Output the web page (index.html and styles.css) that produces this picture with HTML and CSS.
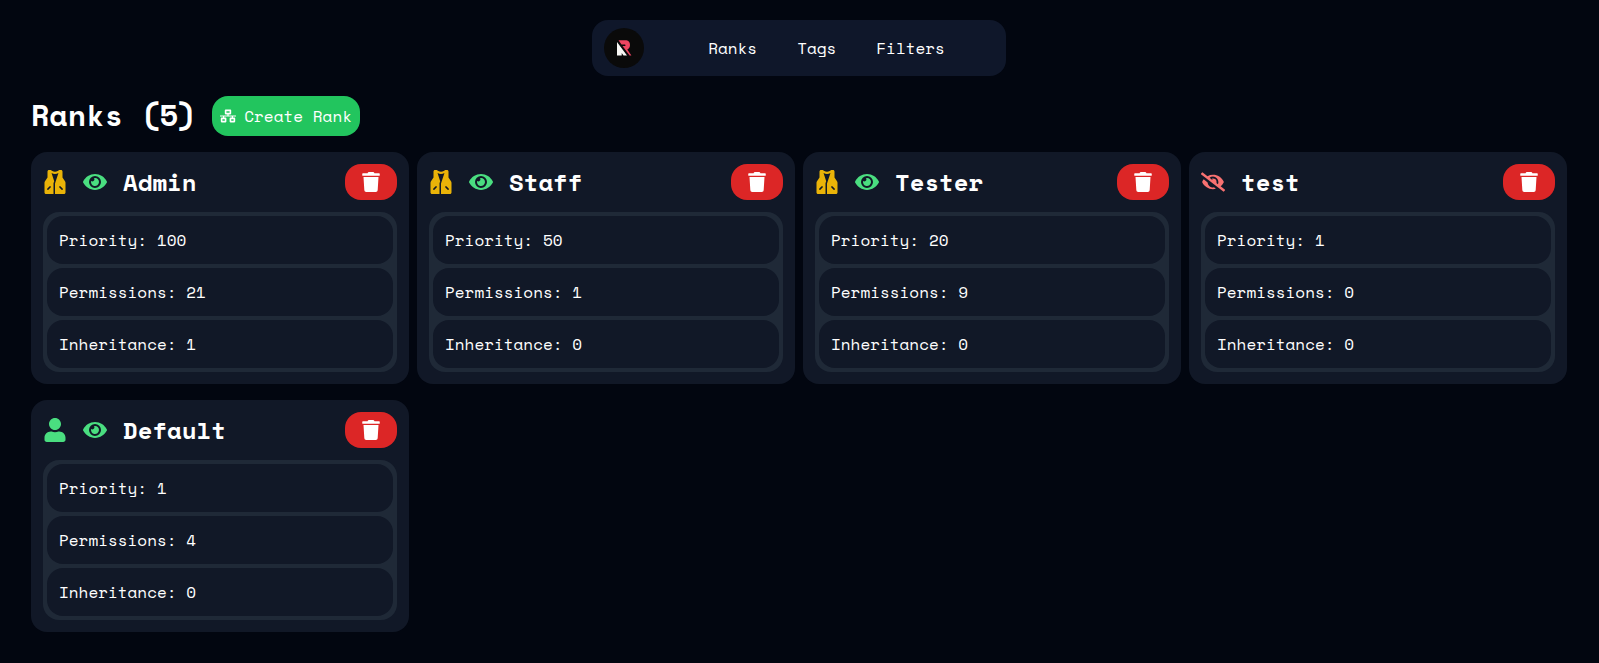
FILE: index.html
```html
<!DOCTYPE html>
<html lang="en">
<head>
<meta charset="utf-8">
<meta name="viewport" content="width=device-width, initial-scale=1">
<title>Ranks</title>
<link rel="stylesheet" href="styles.css">
</head>
<body>
<svg class="sprite" aria-hidden="true">
  <symbol id="eye" viewBox="0 0 576 512"><path d="M572.52 241.4C518.29 135.59 410.93 64 288 64S57.68 135.64 3.48 241.41a32.35 32.35 0 0 0 0 29.19C57.71 376.41 165.07 448 288 448s230.32-71.64 284.52-177.41a32.35 32.35 0 0 0 0-29.19zM288 400a144 144 0 1 1 144-144 143.93 143.93 0 0 1-144 144zm0-240a95.31 95.31 0 0 0-25.31 3.79 47.85 47.85 0 0 1-66.9 66.9A95.78 95.78 0 1 0 288 160z"/></symbol>
  <symbol id="eye-slash" viewBox="0 0 640 512"><path d="M320 400c-75.85 0-137.25-58.71-142.9-133.11L72.2 185.82c-13.79 17.3-26.48 35.59-36.72 55.59a32.35 32.35 0 0 0 0 29.19C89.71 376.41 197.07 448 320 448c26.91 0 52.87-4 77.89-10.46L346 397.39a144.13 144.13 0 0 1-26 2.61zm313.82 58.1l-110.55-85.44a331.25 331.25 0 0 0 81.25-102.07 32.35 32.35 0 0 0 0-29.19C550.29 135.59 442.93 64 320 64a308.15 308.15 0 0 0-147.32 37.7L45.46 3.37A16 16 0 0 0 23 6.18L3.37 31.45A16 16 0 0 0 6.18 53.9l588.36 454.73a16 16 0 0 0 22.46-2.81l19.64-25.27a16 16 0 0 0-2.82-22.45zm-183.72-142l-39.3-30.38A94.75 94.75 0 0 0 416 256a94.76 94.76 0 0 0-121.31-92.21A47.65 47.65 0 0 1 304 192a46.64 46.64 0 0 1-1.54 10l-73.61-56.89A142.31 142.31 0 0 1 320 112a143.92 143.92 0 0 1 144 144c0 21.63-5.29 41.79-13.9 60.11z"/></symbol>
  <symbol id="trash" viewBox="0 0 448 512"><path d="M432 32H312l-9.4-18.7A24 24 0 0 0 281.1 0H166.8a23.72 23.72 0 0 0-21.4 13.3L136 32H16A16 16 0 0 0 0 48v32a16 16 0 0 0 16 16h416a16 16 0 0 0 16-16V48a16 16 0 0 0-16-16zM53.2 467a48 48 0 0 0 47.9 45h245.8a48 48 0 0 0 47.9-45L416 128H32z"/></symbol>
  <symbol id="user" viewBox="0 0 448 512"><path d="M224 256c70.7 0 128-57.3 128-128S294.7 0 224 0 96 57.3 96 128s57.3 128 128 128zm89.6 32h-16.7c-22.2 10.2-46.9 16-72.9 16s-50.6-5.8-72.9-16h-16.7C60.2 288 0 348.2 0 422.4V464c0 26.5 21.5 48 48 48h352c26.5 0 48-21.5 48-48v-41.6c0-74.2-60.2-134.4-134.4-134.4z"/></symbol>
  <symbol id="vest" viewBox="0 0 448 512"><path d="M437.3 239.9L384 160V32c0-17.67-14.33-32-32-32h-32c-4.75 0-9.375 1.406-13.31 4.031l-25 16.66c-35.03 23.38-80.28 23.38-115.4 0l-25-16.66C137.4 1.406 132.7 0 128 0H96C78.33 0 64 14.33 64 32v128L10.75 239.9C3.74 250.4 0 262.7 0 275.4V480c0 17.67 14.33 32 32 32h160V288c0-3.439 .5547-6.855 1.643-10.12l13.49-40.48L150.2 66.56C173.2 79.43 198.5 86.25 224 86.25s50.79-6.824 73.81-19.69L224 288v224h192c17.67 0 32-14.33 32-32V275.4C448 262.7 444.3 250.4 437.3 239.9zM131.3 371.3l-48 48C80.19 422.4 76.09 424 72 424s-8.188-1.562-11.31-4.688c-6.25-6.25-6.25-16.38 0-22.62l48-48c6.25-6.25 16.38-6.25 22.62 0S137.6 365.1 131.3 371.3zM387.3 419.3C384.2 422.4 380.1 424 376 424s-8.188-1.562-11.31-4.688l-48-48c-6.25-6.25-6.25-16.38 0-22.62s16.38-6.25 22.62 0l48 48C393.6 402.9 393.6 413.1 387.3 419.3z"/></symbol>
  <symbol id="network" viewBox="0 0 640 512"><path d="M640 264v-16c0-8.84-7.16-16-16-16H344v-40h72c17.67 0 32-14.33 32-32V32c0-17.67-14.33-32-32-32H224c-17.67 0-32 14.33-32 32v128c0 17.67 14.33 32 32 32h72v40H16c-8.84 0-16 7.16-16 16v16c0 8.84 7.16 16 16 16h104v40H64c-17.67 0-32 14.33-32 32v128c0 17.67 14.33 32 32 32h160c17.67 0 32-14.33 32-32V352c0-17.67-14.33-32-32-32h-56v-40h304v40h-56c-17.67 0-32 14.33-32 32v128c0 17.67 14.33 32 32 32h160c17.67 0 32-14.33 32-32V352c0-17.67-14.33-32-32-32h-56v-40h104c8.84 0 16-7.16 16-16zM256 128V64h128v64H256zm-64 320H96v-64h96v64zm352 0h-96v-64h96v64z"/></symbol>
</svg>

<nav class="navbar">
  <a class="logo" href="#" aria-label="Home">
    <svg viewBox="0 0 40 40" aria-hidden="true">
      <path fill="#f8f7f5" d="M13 14l10 13.500h-3.500l-1.800-2.500v2.500H13z"/>
      <path fill="#ec4561" d="M14.500 12.300H21c3.500 0 5 2 5 4.700 0 2.200-1 3.700-2.700 4.500L27.400 27.500h-1.800L18.500 18h2.300c1 0 1-1.400 0-1.400h-3.300z"/>
    </svg>
  </a>
  <ul class="links">
    <li><a href="#">Ranks</a></li>
    <li><a href="#">Tags</a></li>
    <li><a href="#">Filters</a></li>
  </ul>
</nav>

<main class="page">
  <header class="page-head">
    <h1>Ranks (5)</h1>
    <button class="create" type="button"><svg class="icon-sm" aria-hidden="true"><use href="#network"/></svg>Create Rank</button>
  </header>

  <section class="cards">
    <article class="card">
      <header class="card-head">
        <svg class="icon gold" aria-hidden="true"><use href="#vest"/></svg>
        <svg class="icon green" aria-hidden="true"><use href="#eye"/></svg>
        <h2>Admin</h2>
        <button class="delete" type="button" aria-label="Delete Admin"><svg class="icon-md" aria-hidden="true"><use href="#trash"/></svg></button>
      </header>
      <ul class="stats"><li>Priority: 100</li><li>Permissions: 21</li><li>Inheritance: 1</li></ul>
    </article>
    <article class="card">
      <header class="card-head">
        <svg class="icon gold" aria-hidden="true"><use href="#vest"/></svg>
        <svg class="icon green" aria-hidden="true"><use href="#eye"/></svg>
        <h2>Staff</h2>
        <button class="delete" type="button" aria-label="Delete Staff"><svg class="icon-md" aria-hidden="true"><use href="#trash"/></svg></button>
      </header>
      <ul class="stats"><li>Priority: 50</li><li>Permissions: 1</li><li>Inheritance: 0</li></ul>
    </article>
    <article class="card">
      <header class="card-head">
        <svg class="icon gold" aria-hidden="true"><use href="#vest"/></svg>
        <svg class="icon green" aria-hidden="true"><use href="#eye"/></svg>
        <h2>Tester</h2>
        <button class="delete" type="button" aria-label="Delete Tester"><svg class="icon-md" aria-hidden="true"><use href="#trash"/></svg></button>
      </header>
      <ul class="stats"><li>Priority: 20</li><li>Permissions: 9</li><li>Inheritance: 0</li></ul>
    </article>
    <article class="card">
      <header class="card-head">
        <svg class="icon red" aria-hidden="true"><use href="#eye-slash"/></svg>
        <h2>test</h2>
        <button class="delete" type="button" aria-label="Delete test"><svg class="icon-md" aria-hidden="true"><use href="#trash"/></svg></button>
      </header>
      <ul class="stats"><li>Priority: 1</li><li>Permissions: 0</li><li>Inheritance: 0</li></ul>
    </article>
    <article class="card">
      <header class="card-head">
        <svg class="icon green" aria-hidden="true"><use href="#user"/></svg>
        <svg class="icon green" aria-hidden="true"><use href="#eye"/></svg>
        <h2>Default</h2>
        <button class="delete" type="button" aria-label="Delete Default"><svg class="icon-md" aria-hidden="true"><use href="#trash"/></svg></button>
      </header>
      <ul class="stats"><li>Priority: 1</li><li>Permissions: 4</li><li>Inheritance: 0</li></ul>
    </article>
  </section>
</main>
</body>
</html>
```
FILE: styles.css
```css
* {
  box-sizing: border-box;
}

body {
  margin: 0;
  padding: 20px 32px 20px 31px;
  display: flex;
  flex-direction: column;
  align-items: center;
  gap: 20px;
  background: #020610;
  color: #fff;
  font: 16px/24px "Space Mono", "DejaVu Sans Mono", monospace;
}

h1,
h2,
ul {
  margin: 0;
  padding: 0;
}

ul {
  list-style: none;
}

a {
  color: inherit;
  text-decoration: none;
}

button {
  border: 0;
  border-radius: 16px;
  color: inherit;
  font: inherit;
  cursor: pointer;
}

svg {
  display: block;
  flex: none;
  fill: currentColor;
}

.sprite {
  display: none;
}

.navbar {
  display: flex;
  align-items: center;
  gap: 64px;
  padding: 8px 61px 8px 12px;
  border-radius: 16px;
  background: #0f172a;
}

.logo {
  width: 40px;
  height: 40px;
  border-radius: 50%;
  background: #0a0a0a;
}

.links {
  display: flex;
  gap: 40px;
}

.page {
  width: 100%;
  max-width: 1536px;
}

.page-head {
  display: flex;
  align-items: flex-start;
  gap: 16px;
  margin-bottom: 16px;
}

h1 {
  font-size: 30px;
  line-height: 38px;
}

.create {
  display: flex;
  align-items: center;
  gap: 8px;
  padding: 8px;
  background: #22c55e;
}

.icon-sm {
  width: 16px;
  height: 16px;
}

.icon-md {
  width: 20px;
  height: 20px;
}

.icon {
  width: 24px;
  height: 24px;
}

.gold {
  color: #eab308;
}

.green {
  color: #4ade80;
}

.red {
  color: #f87171;
}

.cards {
  display: grid;
  grid-template-columns: repeat(auto-fill, minmax(320px, 1fr));
  gap: 16px 8px;
}

.card {
  display: grid;
  gap: 12px;
  padding: 12px;
  border-radius: 16px;
  background: #111827;
}

.card-head {
  display: flex;
  align-items: center;
  gap: 16px;
}

h2 {
  font-size: 24px;
  line-height: 32px;
}

.delete {
  margin-left: auto;
  padding: 8px 16px;
  background: #dc2626;
}

.stats {
  display: grid;
  gap: 4px;
  padding: 4px;
  border-radius: 16px;
  background: #1f2937;
}

.stats li {
  padding: 12px;
  border-radius: 16px;
  background: #111827;
}
```
